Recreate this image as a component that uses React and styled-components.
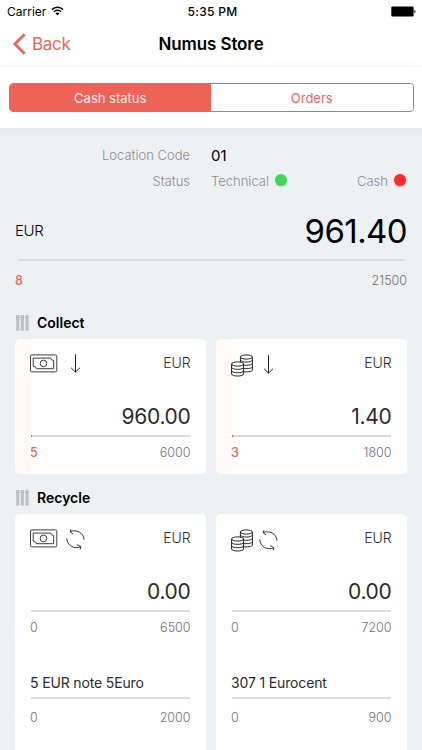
import React from "react";
import styled, { createGlobalStyle } from "styled-components";

//color
const colors = {
  accent: "#ef6257",
  accentText: "#e8675c",
  background: "#edf1f4",
  grey: "#8b8c91",
  dark: "#2b2b2d",
  line: "#d9dadd",
};

const collect = [
  { kind: "note", amount: "960.00", count: 5, max: 6000 },
  { kind: "coin", amount: "1.40", count: 3, max: 1800 },
];

const recycle = [
  {
    kind: "note",
    amount: "0.00",
    count: 0,
    max: 6500,
    item: { name: "5 EUR note 5Euro", count: 0, max: 2000 },
  },
  {
    kind: "coin",
    amount: "0.00",
    count: 0,
    max: 7200,
    item: { name: "307 1 Eurocent", count: 0, max: 900 },
  },
];

const WifiIcon = () => (
  <svg width="13" height="10" viewBox="0 0 13 10" fill="none" stroke="#000">
    <path d="M0.9 3.6C4 0.5 9 0.5 12.1 3.6" strokeWidth="1.5" />
    <path d="M2.9 5.7C4.9 3.7 8.1 3.7 10.1 5.7" strokeWidth="1.4" />
    <path d="M6.5 9.4L4.5 7.3C5.6 6.2 7.4 6.2 8.5 7.3Z" fill="#000" stroke="none" />
  </svg>
);

const BatteryIcon = () => (
  <svg width="26" height="11" viewBox="0 0 26 11">
    <rect x="1.3" y="0.5" width="22.3" height="10" rx="1.2" />
    <path d="M24.3 3.8C25.9 4.2 25.9 6.8 24.3 7.2Z" />
  </svg>
);

const BackIcon = () => (
  <svg width="13" height="22" viewBox="0 0 13 22" fill="none">
    <path d="M11.6 1.2L2 11L11.6 20.8" stroke={colors.accentText} strokeWidth="2.9" />
  </svg>
);

const TubesIcon = () => (
  <svg width="13" height="16" viewBox="0 0 13 16">
    {[0, 4.6, 9.2].map((x) => (
      <g key={x}>
        <rect x={x + 0.2} y="0.4" width="3.2" height="15.2" fill="#bfc1c4" />
        <rect x={x + 0.2} y="0.4" width="3.2" height="2.6" fill="#b0b2b5" />
        <rect x={x + 1.2} y="1.2" width="1.2" height="1" fill="#eef1f4" />
      </g>
    ))}
  </svg>
);

const NoteIcon = () => (
  <svg width="28" height="19" viewBox="0 0 28 19" fill="none" stroke="#333" strokeWidth="0.95">
    <rect x="0.5" y="0.9" width="26.3" height="17" rx="1.4" />
    <path d="M3.2 4.1H20.8Q21 6.4 23.7 6.5V14.7H6.4Q6.2 12.4 3.2 12.2Z" />
    <circle cx="13.5" cy="9.4" r="3.3" />
  </svg>
);

const CoinIcon = () => (
  <svg width="22" height="23" viewBox="0 0 22 23" fill="none" stroke="#222" strokeWidth="1">
    <ellipse cx="15.4" cy="3" rx="6" ry="2.1" />
    <path d="M9.4 3V8M21.4 3V16C21.4 17.3 18.3 18.2 13.2 17.8" />
    <path d="M9.4 6.1C10.5 8.7 20.5 8.7 21.4 6.1M12.6 11.1C17 11.6 21 10.9 21.4 9.4M13.2 14.5C17.4 14.9 21.2 14.2 21.4 12.7" />
    <ellipse cx="6.6" cy="10" rx="6" ry="2.1" />
    <path d="M0.6 10V20C0.6 22.7 12.6 22.7 12.6 20V10" />
    <path d="M0.6 13.3C0.6 16 12.6 16 12.6 13.3M0.6 16.7C0.6 19.4 12.6 19.4 12.6 16.7" />
  </svg>
);

const ArrowIcon = () => (
  <svg width="12" height="20" viewBox="0 0 12 20" fill="none" stroke="#222" strokeWidth="1">
    <path d="M5.5 0.3V18M1 13.7L5.5 18.1L10 13.7" />
  </svg>
);

const CycleIcon = () => (
  <svg width="20" height="21" viewBox="0 0 20 21" fill="none" stroke="#333" strokeWidth="1">
    <path d="M4.2 2.6C10 0.2 17.6 3.4 18 10.6M4.9 0.2L4.1 2.7L7 4.9" />
    <path d="M0.8 9.4C1 16.6 8.2 20.6 14.7 17.8M11.1 15.7L14.9 17.6L14.2 20.4" />
  </svg>
);

const Meter = ({ count, max }) => (
  <>
    <Line>{count > 0 && <LineFill style={{ width: `${Math.ceil((count / max) * 160)}px` }} />}</Line>
    <Limits>
      <Count $active={count > 0}>{count}</Count>
      <Max>{max}</Max>
    </Limits>
  </>
);

const CashCard = ({ data, recycling }) => (
  <Card $tint={data.count > 0} $tall={recycling}>
    <CardHead>
      <IconSlot $kind={data.kind}>{data.kind === "note" ? <NoteIcon /> : <CoinIcon />}</IconSlot>
      <ActionSlot $kind={data.kind} $recycling={recycling}>
        {recycling ? <CycleIcon /> : <ArrowIcon />}
      </ActionSlot>
      <CardCurrency>EUR</CardCurrency>
    </CardHead>
    <Amount>{data.amount}</Amount>
    <Meter count={data.count} max={data.max} />
    {data.item && (
      <Item>
        <ItemName>{data.item.name}</ItemName>
        <Meter count={data.item.count} max={data.item.max} />
      </Item>
    )}
  </Card>
);

const App = () => {
  return (
    <Screen>
      <GlobalStyle />
      <StatusBar>
        <Carrier>
          Carrier <WifiIcon />
        </Carrier>
        <Clock>5:35 PM</Clock>
        <Battery>
          <BatteryIcon />
        </Battery>
      </StatusBar>
      <NavBar>
        <Back>
          <BackIcon />
          <BackLabel>Back</BackLabel>
        </Back>
        <Title>Numus Store</Title>
        <span />
      </NavBar>
      <TabPanel>
        <Tabs>
          <Tab $active>Cash status</Tab>
          <Tab>Orders</Tab>
        </Tabs>
      </TabPanel>

      <Info>
        <InfoLabel>Location Code</InfoLabel>
        <Code>01</Code>
        <InfoLabel>Status</InfoLabel>
        <StatusRow>
          <StatusItem>
            Technical <Dot $color="#44d65c" />
          </StatusItem>
          <StatusItem>
            Cash <Dot $color="#ff2a2d" />
          </StatusItem>
        </StatusRow>
      </Info>

      <Total>
        <TotalRow>
          <TotalCurrency>EUR</TotalCurrency>
          <TotalAmount>961.40</TotalAmount>
        </TotalRow>
        <TotalLine />
        <Limits>
          <Count $active>8</Count>
          <Max>21500</Max>
        </Limits>
      </Total>

      <SectionTitle>
        <TubesIcon />
        <SectionName>Collect</SectionName>
      </SectionTitle>
      <Cards>
        {collect.map((data) => (
          <CashCard key={data.kind} data={data} />
        ))}
      </Cards>

      <SectionTitle>
        <TubesIcon />
        <SectionName>Recycle</SectionName>
      </SectionTitle>
      <Cards>
        {recycle.map((data) => (
          <CashCard key={data.kind} data={data} recycling />
        ))}
      </Cards>
    </Screen>
  );
};

const GlobalStyle = createGlobalStyle`
  * {
    box-sizing: border-box;
  }
  body {
    margin: 0;
    overflow: hidden;
    font-family: Inter, "Liberation Sans", sans-serif;
  }
  svg {
    display: block;
    flex: none;
  }
`;

const Screen = styled.div`
  width: 422px;
  height: 750px;
  overflow: hidden;
  background-color: ${colors.background};
  white-space: nowrap;
`;

const StatusBar = styled.div`
  display: grid;
  grid-template-columns: 1fr auto 1fr;
  align-items: center;
  height: 22px;
  padding: 0 6px 0 7px;
  background-color: #fff;
  font-size: 12px;
`;

const Carrier = styled.div`
  display: flex;
  align-items: center;
  gap: 5px;
`;

const Clock = styled.div`
  padding-left: 2px;
  font-weight: 500;
  letter-spacing: 0.3px;
`;

const Battery = styled.div`
  justify-self: end;
`;

const NavBar = styled.div`
  display: grid;
  grid-template-columns: 1fr auto 1fr;
  align-items: center;
  height: 44px;
  padding: 0 13px;
  background-color: #fff;
`;

const Back = styled.div`
  display: flex;
  align-items: center;
  gap: 6px;
  color: ${colors.accentText};
`;

const BackLabel = styled.span`
  font-size: 17px;
  letter-spacing: -0.3px;
`;

const Title = styled.div`
  padding-bottom: 1px;
  font-size: 17px;
  font-weight: 600;
  letter-spacing: -0.1px;
`;

const TabPanel = styled.div`
  position: relative;
  height: 62px;
  padding: 16px 8.5px 0;
  border-top: 1px solid #f4f4f5;
  background-color: #fff;
  box-shadow: 0 2px 10px rgba(60, 60, 80, 0.06);
`;

const Tabs = styled.div`
  display: grid;
  grid-template-columns: 1fr 1fr;
  height: 29px;
  border: 1px solid ${colors.accent};
  border-radius: 4px;
  overflow: hidden;
`;

const Tab = styled.div`
  display: flex;
  align-items: center;
  justify-content: center;
  font-size: 13px;
  color: ${(props) => (props.$active ? "#fff0ec" : colors.accentText)};
  background-color: ${(props) => (props.$active ? colors.accent : "#fff")};
`;

const Info = styled.div`
  display: grid;
  grid-template-columns: 175px 1fr;
  grid-template-rows: 26px 26px;
  column-gap: 21px;
  align-items: center;
  padding: 14px 16px 0 15px;
`;

const InfoLabel = styled.div`
  text-align: right;
  font-size: 13px;
  font-weight: 300;
  color: ${colors.grey};
`;

const Code = styled.div`
  font-size: 15px;
`;

const StatusRow = styled.div`
  display: flex;
  justify-content: space-between;
`;

const StatusItem = styled.div`
  display: flex;
  align-items: center;
  gap: 6px;
  font-size: 13px;
  font-weight: 300;
  color: ${colors.grey};
`;

const Dot = styled.span`
  width: 12px;
  height: 12px;
  margin-top: -3px;
  border-radius: 50%;
  background-color: ${(props) => props.$color};
  box-shadow: 0 1px 2px ${(props) => props.$color}66;
`;

const Total = styled.div`
  height: 105px;
  padding: 14px 15px 0;
`;

const TotalRow = styled.div`
  display: flex;
  align-items: center;
  justify-content: space-between;
  height: 45px;
`;

const TotalCurrency = styled.span`
  font-size: 15px;
  font-weight: 300;
  letter-spacing: -0.4px;
`;

const TotalAmount = styled.span`
  font-size: 33px;
  letter-spacing: -0.6px;
`;

const TotalLine = styled.div`
  height: 2px;
  margin: 6px 3px 0 3px;
  background-color: ${colors.line};
`;

const Line = styled.div`
  height: 2px;
  margin: 0 1px;
  background-color: ${colors.line};
`;

const LineFill = styled.div`
  height: 2px;
  background-color: ${colors.accent};
`;

const Limits = styled.div`
  display: flex;
  align-items: center;
  justify-content: space-between;
  height: 38px;
  font-size: 12.5px;
`;

const Count = styled.span`
  font-weight: ${(props) => (props.$active ? 500 : 300)};
  color: ${(props) => (props.$active ? colors.accentText : "#707173")};
`;

const Max = styled.span`
  font-weight: 300;
  color: #707173;
`;

const SectionTitle = styled.div`
  display: flex;
  align-items: center;
  gap: 8px;
  height: 40px;
  padding: 8px 16px 0;
`;

const SectionName = styled.span`
  padding-bottom: 2px;
  font-size: 14px;
  font-weight: 600;
`;

const Cards = styled.div`
  display: grid;
  grid-template-columns: 191px 191px;
  column-gap: 10px;
  padding: 0 15px;
`;

const Card = styled.div`
  height: ${(props) => (props.$tall ? 260 : 135)}px;
  padding: 0 15.5px 0 15px;
  border-radius: 5px;
  background: ${(props) =>
    props.$tint ? "linear-gradient(90deg, #fff9f8 16px, #fff 16px)" : "#fff"};

  ${Limits} {
    height: 31px;
  }
`;

const CardHead = styled.div`
  display: flex;
  height: 49px;
`;

const IconSlot = styled.div`
  width: ${(props) => (props.$kind === "note" ? 28 : 22)}px;
  padding-top: 15px;
`;

const ActionSlot = styled.div`
  padding-top: ${(props) => (props.$kind === "note" ? 15 : 16)}px;
  padding-left: ${(props) =>
    (props.$recycling ? 8 : 12) - (props.$kind === "note" ? 0 : 2)}px;
`;

const CardCurrency = styled.div`
  margin-left: auto;
  line-height: 47px;
  font-size: 14px;
  font-weight: 300;
  letter-spacing: -0.1px;
  color: ${colors.dark};
`;

const Amount = styled.div`
  height: 47px;
  line-height: 57px;
  text-align: right;
  font-size: 21px;
  letter-spacing: -0.3px;
  color: ${colors.dark};
`;

const Item = styled.div`
  && ${Limits} {
    height: 36px;
  }
`;

const ItemName = styled.div`
  height: 54px;
  padding-top: 30px;
  line-height: 20px;
  font-size: 14px;
  letter-spacing: -0.15px;
  color: ${colors.dark};
`;

export default App;
